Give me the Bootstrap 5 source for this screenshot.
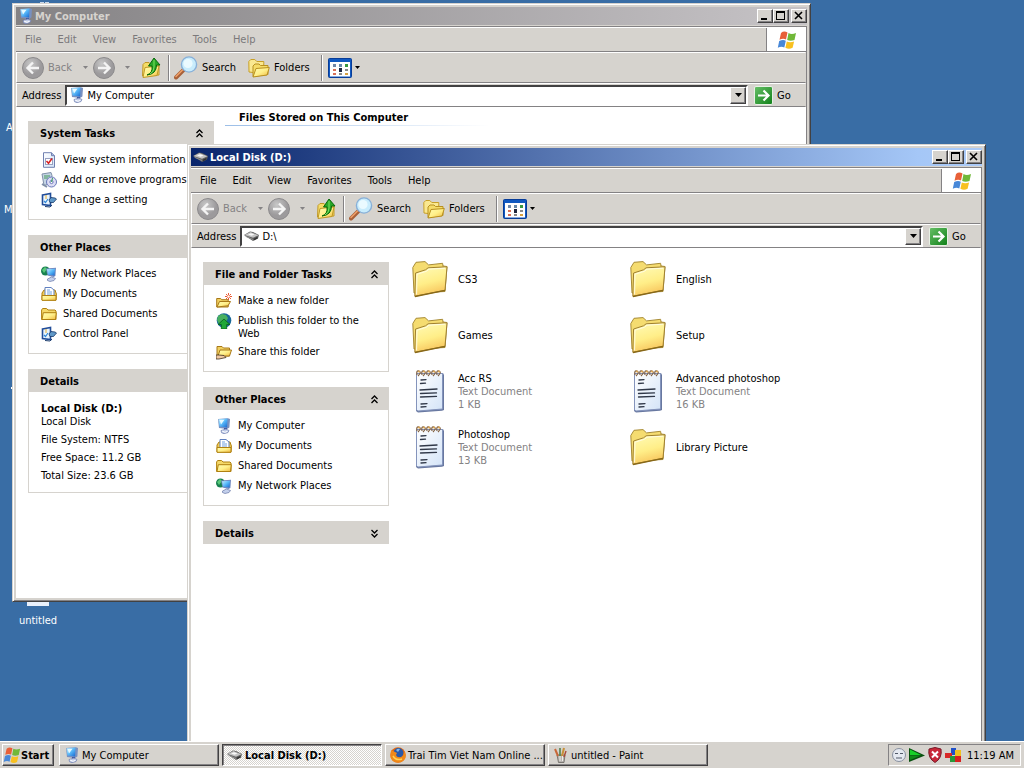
<!DOCTYPE html>
<html lang="en">
<head>
<meta charset="utf-8">
<meta name="viewport" content="width=device-width, initial-scale=1">
<title>Desktop</title>
<link href="https://cdn.jsdelivr.net/npm/bootstrap@5.3.0/dist/css/bootstrap.min.css" rel="stylesheet">
<style>
:root{--face:#d6d3ce;--shade:#848284;--dark:#424142;}
body{font:11px/13px "DejaVu Sans Condensed","DejaVu Sans",sans-serif;color:#000;background:#396da5;overflow:hidden}
a{color:inherit;text-decoration:none}
button{font:inherit;color:inherit;background:none;border:0;padding:0;line-height:13px;text-align:left}
svg{display:block;flex:none}
.defs{width:0;height:0;position:absolute}
.i16{width:16px;height:16px}
.desk>a{position:absolute;color:#fff;width:70px;text-align:center}
.win{position:absolute;background:var(--face);border:1px solid;border-color:var(--face) var(--dark) var(--dark) var(--face);box-shadow:inset 1px 1px #fff,inset -1px -1px var(--shade);padding:3px}
.win-my{left:12px;top:3px;right:213px;bottom:139px}
.win-disk{left:187px;top:144px;right:38px;bottom:-20px}
.titlebar{height:18px;color:var(--face);font-weight:bold;padding:0 0 0 2px;background:linear-gradient(90deg,#848284,#c6c3c6)}
.win-disk .titlebar{color:#fff;background:linear-gradient(90deg,#08246b,#a5c7f7 92%,#adcbf7)}
.titlebar svg{margin-right:1px}
.capbtn{width:16px;height:14px;background:var(--face);border:1px solid;border-color:#fff var(--dark) var(--dark) #fff;box-shadow:inset -1px -1px var(--shade)}
.capbtn svg{width:14px;height:12px}
.capclose{margin-left:2px}
.client{border:1px solid var(--shade);border-width:1px 1px 0 0;margin-top:1px;background:#fff}
.menubar{height:25px;border-bottom:1px solid var(--shade);background:var(--face);border-top:1px solid #fff;padding-left:1px}
.menubar button{padding:0 8px}
.win-my .menubar{color:#7b797b}
.brand{width:40px;background:#fff;border-left:1px solid var(--shade)}
.toolbar{display:grid;grid-template-columns:56px 15px 24px 20px 27px 10px 74px 67px 13px 24px 10px;align-items:center;height:31px;background:var(--face);border:1px solid;border-color:#fff var(--face) var(--shade) #fff;padding-left:5px}
.toolbar button{display:flex;align-items:center}
.toolbar .off{color:var(--shade)}
.rule{width:2px;height:26px;border-left:1px solid var(--shade);border-right:1px solid #fff;justify-self:center}
.arrow{width:7px;height:4px;margin:auto}
.toolbar .arrow{width:5px;height:3px}
.address{height:24px;background:var(--face);border:1px solid;border-color:#fff var(--face) var(--shade) #fff;padding-left:5px}
.combo{height:21px;background:#fff;border:2px solid;border-color:var(--dark) #fff #fff var(--dark);padding-left:2px}
.combo input{border:0;outline:0;background:none;font:inherit;padding:1px 0 0 2px;min-width:0}
.drop{width:16px;height:17px;background:var(--face);border:1px solid;border-color:#fff var(--dark) var(--dark) #fff;box-shadow:inset -1px -1px var(--shade)}
.gobtn{width:57px;padding-left:6px}
.side{width:186px;margin:14px 0 0 12px;flex:none}
.panel{margin-bottom:15px}
.panel h2{font-size:11px;line-height:23px;height:23px;font-weight:bold;margin:0;padding:1px 10px 0 12px;background:var(--face)}
.panel .inner{border:1px solid var(--face);border-top:0;padding:8px 4px 11px 12px}
.panel li{display:flex;min-height:16px;margin-bottom:4px}
.panel li:last-child{margin-bottom:0}
.panel li a{display:flex}
.panel li span{padding:1px 0 0 6px;max-width:150px}
.panel .facts{padding:10px 4px 10px 12px}
.facts p{margin:0 0 5px}
.stored{margin:4px 0 0 11px}
.stored h1{font-size:11px;line-height:13px;font-weight:bold;margin:0;padding:0 0 0 14px}
.stored hr{margin:1px 0 0;width:265px;border:0;height:1px;opacity:1;background:linear-gradient(90deg,#9cbee7,#fff)}
.files{display:grid;grid-template-columns:218px 218px;grid-auto-rows:56px;align-content:start;margin:3px 0 0 23px}
.files a{display:flex;align-items:center}
.files svg{width:36px;height:44px;margin-right:10px}
.files small{font-size:11px;color:var(--shade);display:block}
.taskbar{height:27px;background:var(--face);box-shadow:inset 0 1px #fff;padding:3px 3px 2px 2px;position:relative;z-index:5}
.taskbtn{width:160px;height:22px;margin-right:3px;padding:0 2px 0 4px;background:var(--face);border:1px solid;border-color:#fff var(--dark) var(--dark) #fff;box-shadow:inset -1px -1px var(--shade);display:flex;align-items:center}
.taskbtn svg{margin-right:2px}
.startbtn{width:52px;margin-right:5px;padding:0;font-weight:bold}
.startbtn svg{margin-right:0}
.pressed{font-weight:bold;border-color:var(--dark) #fff #fff var(--dark);box-shadow:inset 1px 1px var(--shade);background:repeating-conic-gradient(#fff 0 25%,#d6d3ce 0 50%) 0 0/2px 2px}
.tray{border:1px solid;border-color:var(--shade) #fff #fff var(--shade);height:22px;padding:0 6px 0 2px;gap:2px}
</style>
</head>
<body class="vh-100 d-flex flex-column">
<svg class="defs" aria-hidden="true">
<defs>
<linearGradient id="gf" x1="0" y1="0" x2="1" y2="1"><stop offset="0" stop-color="#fffbb0"/><stop offset=".5" stop-color="#fff08a"/><stop offset="1" stop-color="#f0b840"/></linearGradient>
<linearGradient id="gb" x1="0" y1="0" x2=".3" y2="1"><stop offset="0" stop-color="#fffbb8"/><stop offset=".6" stop-color="#ffee88"/><stop offset="1" stop-color="#f8c860"/></linearGradient>
<linearGradient id="gs" x1="0" y1="0" x2="1" y2="1"><stop offset="0" stop-color="#c8f0ff"/><stop offset=".5" stop-color="#58b8f8"/><stop offset="1" stop-color="#1868d0"/></linearGradient>
<radialGradient id="gg" cx=".4" cy=".3"><stop offset="0" stop-color="#c8c8c8"/><stop offset="1" stop-color="#9c9a9c"/></radialGradient>
<radialGradient id="gw" cx=".3" cy=".25" r=".8"><stop offset="0" stop-color="#90e088"/><stop offset=".5" stop-color="#189048"/><stop offset="1" stop-color="#084828"/></radialGradient>
<linearGradient id="gp" x1="0" y1="0" x2="1" y2="1"><stop offset="0" stop-color="#fff"/><stop offset="1" stop-color="#d4e4f8"/></linearGradient>
<linearGradient id="gn" x1="0" y1="0" x2="1" y2="1"><stop offset="0" stop-color="#68c068"/><stop offset="1" stop-color="#108018"/></linearGradient>
</defs>
<symbol id="pc" viewBox="0 0 16 16"><path d="M2 1l10-.8 2 .8-.6 8.500-2.400 1.500-8-1z" fill="#7890c0"/><path d="M2.500 1.200l9-.8-.4 9L3.500 8.500z" fill="url(#gs)"/><path d="M3.500 2l5-.3L5 6.500z" fill="#e8faff"/><path d="M8 10l3 0 0 2-3-.3z" fill="#4058a0"/><path d="M5 12.500l5-1.500 3 1.500-1 2-4 1.200-2.500-1z" fill="#c0cce8" stroke="#7080b0" stroke-width=".7"/><path d="M6 13l3 1.300 2.500-1" stroke="#fff" fill="none"/></symbol>
<symbol id="drive" viewBox="0 0 16 16"><path d="M0 7l6-3.500 3 .5 6 3-1 3.500-5 2.500z" fill="#606060"/><path d="M.5 7l6-3 8 3.200-5.500 2.600z" fill="#c4c4c4"/><path d="M4 6.500l3-1.200 3.500 1.300-3 1.200z" fill="#f8f8f8"/><path d="M1 7.600l8 3.400v1L2 9z" fill="#909090"/><path d="M10 11.500l3.500-1.800" stroke="#303030" stroke-width="1.500"/></symbol>
<symbol id="net" viewBox="0 0 16 16"><circle cx="4.500" cy="5" r="4.500" fill="#188050"/><path d="M1 4l3-3 2 2-3 4z" fill="#58c878"/><path d="M5 2.500l10-.8-.6 8.300-1.900 1-6-1.500z" fill="#7088c0"/><path d="M6 3.300l8-.6-.5 6.800L7 8.600z" fill="url(#gs)"/><path d="M6.500 13l4-2 4 1.500-1.500 2-4 1-2.500-1z" fill="#c4d0ec" stroke="#6878a8" stroke-width=".7"/></symbol>
<symbol id="fold" viewBox="0 0 16 16"><path d="M.6 13.500V4l1-1.500h4L7 4h7l1 1v8.500z" fill="#f4d868" stroke="#b08010"/><path d="M1 13.500l1.300-6.800h13L14.500 13.500z" fill="url(#gf)" stroke="#b08010"/></symbol>
<symbol id="docs" viewBox="0 0 16 16"><path d="M1 14V7l2-3h11l1.400 4-.4 6z" fill="#f0cc58" stroke="#b08010"/><path d="M4 10V1.500h6l3 2.500v6z" fill="#fff" stroke="#6080c0"/><path d="M6 4h3M6 6h5M6 8h5" stroke="#70a0e0"/><path d="M1 14.300V9.500h14v4.800z" fill="url(#gf)" stroke="#b08010"/></symbol>
<symbol id="control" viewBox="0 0 16 16"><path d="M1.500 3l8-1.500v12l-8-1z" fill="#e8f4ff" stroke="#204c98" stroke-width="1.600"/><path d="M3 9l1.500 1.500L7 7" stroke="#3088d8" stroke-width="1.200" fill="none"/><path d="M10 5.500l4 .5 1.500 1-3 3.500H9L8 8z" fill="#6098c8" stroke="#183868" stroke-width=".8"/><path d="M4 14.500l5 .5 2-2" stroke="#204070" fill="none"/><path d="M5 3v4" stroke="#e8b030"/></symbol>
<symbol id="sys" viewBox="0 0 16 16"><path d="M2.500.7h8l3 3v11.600h-11z" fill="url(#gp)" stroke="#7080b0"/><path d="M10.500.7v3h3" fill="#a8b8e0" stroke="#7080b0"/><rect x="4.500" y="6.500" width="7" height="6" fill="#fff" stroke="#98a0c0"/><path d="M5.500 9l2 2.300L11 6.500" stroke="#d82020" stroke-width="1.500" fill="none"/></symbol>
<symbol id="addrem" viewBox="0 0 16 16"><path d="M1 2l9-1.500 1 3-1 8-7 2z" fill="#c4d4e4" stroke="#8090a8"/><path d="M3 4h6M3 6h4" stroke="#409858"/><circle cx="10.500" cy="10" r="5" fill="#dcdcf4" stroke="#6878b8"/><circle cx="10.500" cy="10" r="1.600" fill="#fff" stroke="#6878b8"/><path d="M10.500 10l1-4" stroke="#38a058"/><path d="M1 12l5 3" stroke="#8090a8" stroke-width="2"/></symbol>
<symbol id="newf" viewBox="0 0 16 16"><path d="M.7 14V5.500h4l1 1.200h6.500V14z" fill="#f0d060" stroke="#a87818"/><path d="M1 14l2.500-5.500h11L12 12.800z" fill="url(#gf)" stroke="#a87818"/><path d="M12.500 0v7M9 3.500h7M10 1l5 5M15 1l-5 5" stroke="#e84820" stroke-width=".9"/><circle cx="12.500" cy="3.500" r="1.200" fill="#fff"/></symbol>
<symbol id="globe" viewBox="0 0 16 16"><circle cx="8" cy="7.500" r="7.300" fill="#186898"/><path d="M2 3l4-2 4 1 2 3-2 4-4-1-3 3-2-4z" fill="#48b060"/><path d="M8 6l6 5.500h-3.300V16H5.300v-4.500H2z" fill="#20a838" stroke="#086018" stroke-width=".8"/></symbol>
<symbol id="share" viewBox="0 0 16 16"><path d="M1 12V2.500h5L7.500 4h6v8z" fill="#f0d060" stroke="#a87818"/><path d="M2 12l2-6h11.500l-2 6z" fill="url(#gf)" stroke="#a87818"/><path d="M0 11h3l5 .5 2 2-7 1.500H0z" fill="#f0c8a0" stroke="#403020" stroke-width=".8"/></symbol>
<symbol id="bigf" viewBox="0 0 36 44"><path d="M2 36L.8 10.500 4 5.300l9-.7 3.600 3.300 14-1.600.4 2.700 4 .5-2 25z" fill="#f5dc70" stroke="#a88c38"/><path d="M31 8v22" stroke="#c8a848"/><path d="M2.800 39.300L3.600 16l10-3.200 2.500-2L35 9.800l-2 23.500z" fill="url(#gb)" stroke="#a08030"/><path d="M4.600 37.500l.4-20.300 9.600-3 2.400-2 16-1" fill="none" stroke="#fffce0"/><path d="M3 39.500l30-6.200" stroke="#886818" stroke-width="1.300"/></symbol>
<symbol id="note" viewBox="0 0 36 44"><path d="M5 4l26 0 1 2v35l-2 .7L6 43.500 4 42z" fill="#6878a0"/><path d="M4.500 4.500h26V40L6 42l-1.500-1z" fill="url(#gp)" stroke="#8494bc"/><g fill="none" stroke="#806040" stroke-width="1.200"><path d="M5 6q-1-5 2-4t-1 5M10 6q-1-5 2-4t-1 5M15 6q-1-5 2-4t-1 5M20 6q-1-5 2-4t-1 5M25 6q-1-5 2-4t-1 5"/></g><g fill="#e0a850"><circle cx="7" cy="2.500" r="1"/><circle cx="12" cy="2.500" r="1"/><circle cx="17" cy="2.500" r="1"/><circle cx="22" cy="2.500" r="1"/><circle cx="27" cy="2.500" r="1"/></g><path d="M9 11l5-.4M8.500 14.500l5-.3M8 21l17-1M8.500 24.500l16-.6M8.500 28l16-.6M9 35l6-.4M9 38l5-.3" stroke="#303848" stroke-width="1.300" stroke-linecap="round"/></symbol>
<symbol id="back" viewBox="0 0 22 22"><circle cx="11" cy="11" r="10.500" fill="url(#gg)" stroke="#8c8a8c"/><path d="M17 11H6M11 5.500L5.500 11l5.500 5.500" fill="none" stroke="#f4f4f4" stroke-width="2.400"/></symbol>
<symbol id="fwd" viewBox="0 0 22 22"><circle cx="11" cy="11" r="10.500" fill="url(#gg)" stroke="#8c8a8c"/><path d="M5 11h11M11 5.500l5.500 5.500-5.500 5.500" fill="none" stroke="#f4f4f4" stroke-width="2.400"/></symbol>
<symbol id="up" viewBox="0 0 20 22"><path d="M1.500 19L2 7.500l2-2h4l2 2h8V18z" fill="#f5dc68" stroke="#c09828"/><path d="M2 20.500l2-10 14-1.500-2 9.500z" fill="url(#gf)" stroke="#c09828"/><path d="M6 18q6-2 5-9H7.500L13 1l6 7h-3.500q0 9-9.500 10z" fill="#28a828" stroke="#086808"/><path d="M13 3v7q0 5-4 7" stroke="#80e060" fill="none"/></symbol>
<symbol id="find" viewBox="0 0 24 24"><path d="M9.500 14L2 21.500" stroke="#a86038" stroke-width="4" stroke-linecap="round"/><path d="M8.500 14L2 20.500" stroke="#f0a068" stroke-width="1.500" stroke-linecap="round"/><circle cx="15" cy="8.500" r="7.600" fill="#c8ecfc" stroke="#88b0d8" stroke-width="1.400"/><circle cx="14" cy="7.500" r="4.600" fill="#eafaff"/></symbol>
<symbol id="folders" viewBox="0 0 22 20"><path d="M1 14L.8 3.500l2-2h4l2 2h7V7L5 14.500z" fill="#fae890" stroke="#c8a028"/><path d="M5 18.500V8l2-2h4l1.500 1.500H20v9z" fill="#f5dc68" stroke="#b89020"/><path d="M5 19l3-8.500 13.300-1L19 17z" fill="url(#gf)" stroke="#b89020"/></symbol>
<symbol id="views" viewBox="0 0 24 20"><rect x=".5" y=".5" width="23" height="19" rx="1" fill="#1058c0" stroke="#083c98"/><rect x="2" y="4" width="20" height="14.500" fill="#fff"/><path fill="#7088a8" d="M5 6h3v3H5z"/><path fill="#6888a8" d="M11 6h3v3h-3z"/><path fill="#389840" d="M17 6h3v3h-3z"/><path fill="#d87058" d="M5 11h3v2H5zM5 15h3v2H5z"/><path fill="#202840" d="M11 10h3v4h-3z"/><path fill="#888" d="M17 11h3v2h-3zM11 15h3v2h-3z"/><path fill="#d8a040" d="M17 15h3v2h-3z"/></symbol>
<symbol id="flag" viewBox="0 0 20 18"><path d="M4 2q3-2.500 6.500-.5L9 8.500Q6 7 2.500 8.800z" fill="#e86038"/><path d="M11.500 2q3 1.800 7.500 0l-1.500 7q-4 1.500-7.300 0z" fill="#70b838"/><path d="M2.200 10Q6 8 8.800 9.700L7.300 16.500Q4.500 15 .8 16.700z" fill="#4888d8"/><path d="M9.800 10.500q3.200 1.500 7.300 0l-1.500 6.300q-3.700 2-7.200 0z" fill="#f8c020"/></symbol>
<symbol id="go" viewBox="0 0 19 19"><rect x=".5" y=".5" width="18" height="18" rx="1.500" fill="url(#gn)" stroke="#e8f0e4"/><path d="M4 9.500h10M9.500 4.500l5 5-5 5" fill="none" stroke="#fff" stroke-width="2.200"/></symbol>
<symbol id="fox" viewBox="0 0 16 16"><circle cx="8" cy="8" r="7.700" fill="#e06810"/><circle cx="8.500" cy="6" r="5" fill="#2858a8"/><path d="M6 3q2-2 4-1l-2 3z" fill="#80b8e8"/><path d="M1 3l3 1.500L7 6 6 8q1 3 5 2 3-1 3-6 3 4 1 8-3 4-8 3.500Q2 15 .5 10z" fill="#f08818"/><path d="M3 9q3 5 9 3" stroke="#ffd050" stroke-width="1.500" fill="none"/></symbol>
<symbol id="paint" viewBox="0 0 16 16"><path d="M4 8h8l-1 7.500H5.500z" fill="#b8b4b0" stroke="#686460" stroke-width=".8"/><path d="M5 9L2 2" stroke="#c86838" stroke-width="2"/><path d="M7 9V1" stroke="#508050" stroke-width="1.600"/><path d="M9 9l2-8" stroke="#c89038" stroke-width="2"/><path d="M11 10l2-6" stroke="#a84838" stroke-width="1.400"/><path d="M7 9v5M9.500 9v5" stroke="#f0ece8"/></symbol>
<symbol id="dn" viewBox="0 0 7 4"><path d="M0 0h7L3.500 4z" fill="currentColor"/></symbol>
<symbol id="cmin" viewBox="0 0 14 12"><path d="M3 8h6v2H3z"/></symbol>
<symbol id="cmax" viewBox="0 0 14 12"><path d="M2 1h9v9H2zm1 2v6h7V3z" fill-rule="evenodd"/></symbol>
<symbol id="ccls" viewBox="0 0 14 12"><path d="M3 2l7 7M10 2L3 9" stroke="#000" stroke-width="1.600"/></symbol>
<symbol id="chup" viewBox="0 0 9 9"><path d="M1.500 4l3-3 3 3M1.500 8l3-3 3 3" fill="none" stroke="#000" stroke-width="1.300"/></symbol>
<symbol id="chdn" viewBox="0 0 9 9"><path d="M1.500 1l3 3 3-3M1.500 5l3 3 3-3" fill="none" stroke="#000" stroke-width="1.300"/></symbol>
</svg>

<main class="desk flex-grow-1 position-relative overflow-hidden">
  <svg style="position:absolute;left:37px;top:0" width="14" height="5"><path d="M3 2h4v1H3zM8 2h4v1H8z" fill="#c8d8ec"/></svg>
  <a href="#" style="left:6px;top:121px;width:auto">A</a>
  <a href="#" style="left:4px;top:203px;width:auto">M</a>
  <svg style="position:absolute;left:11px;top:387px" width="2" height="2"><path d="M0 0h2v2H0z" fill="#fff"/></svg>
  <a href="#" style="left:3px;top:590px"><svg class="mx-auto" width="22" height="16"><path d="M0 0h22v16H0z" fill="#e8f0fc"/></svg><span class="d-block mt-2">untitled</span></a>

  <section class="win win-my d-flex flex-column" aria-label="My Computer">
    <header class="titlebar d-flex align-items-center"><svg class="i16"><use href="#pc"/></svg><span class="flex-grow-1">My Computer</span>
      <button class="capbtn" aria-label="Minimize"><svg><use href="#cmin"/></svg></button><button class="capbtn" aria-label="Maximize"><svg><use href="#cmax"/></svg></button><button class="capbtn capclose" aria-label="Close"><svg><use href="#ccls"/></svg></button></header>
    <div class="client flex-grow-1">
      <nav class="menubar d-flex"><div class="d-flex flex-grow-1 align-items-center"><button>File</button><button>Edit</button><button>View</button><button>Favorites</button><button>Tools</button><button>Help</button></div><div class="brand d-flex align-items-center justify-content-center"><svg width="20" height="18"><use href="#flag"/></svg></div></nav>
      <div class="toolbar">
        <button class="off"><svg class="me-1" width="22" height="22"><use href="#back"/></svg>Back</button>
        <button class="off" aria-label="Back list"><svg class="arrow"><use href="#dn"/></svg></button>
        <button aria-label="Forward"><svg width="22" height="22"><use href="#fwd"/></svg></button>
        <button class="off" aria-label="Forward list"><svg class="arrow"><use href="#dn"/></svg></button>
        <button class="justify-content-center" aria-label="Up"><svg width="20" height="22"><use href="#up"/></svg></button>
        <span class="rule"></span>
        <button><svg width="24" height="24" class="me-1"><use href="#find"/></svg>Search</button>
        <button><svg width="22" height="20" class="me-1"><use href="#folders"/></svg>Folders</button>
        <span class="rule"></span>
        <button aria-label="Views"><svg width="24" height="20"><use href="#views"/></svg></button>
        <button aria-label="View list"><svg class="arrow"><use href="#dn"/></svg></button>
      </div>
      <div class="address d-flex align-items-center"><label for="addr1" class="me-1">Address</label>
        <div class="combo d-flex align-items-center flex-grow-1"><svg class="i16"><use href="#pc"/></svg><input id="addr1" class="flex-grow-1" value="My Computer"><button class="drop" aria-label="History"><svg class="arrow"><use href="#dn"/></svg></button></div>
        <button class="gobtn d-flex align-items-center"><svg class="me-1" width="19" height="19"><use href="#go"/></svg>Go</button></div>
      <div class="d-flex">
        <aside class="side">
          <div class="panel"><h2 class="d-flex align-items-center justify-content-between">System Tasks<svg width="9" height="9"><use href="#chup"/></svg></h2>
            <ul class="inner list-unstyled m-0"><li><a href="#"><svg class="i16"><use href="#sys"/></svg><span class="text-nowrap">View system information</span></a></li><li><a href="#"><svg class="i16"><use href="#addrem"/></svg><span class="text-nowrap">Add or remove programs</span></a></li><li><a href="#"><svg class="i16"><use href="#control"/></svg><span>Change a setting</span></a></li></ul></div>
          <div class="panel"><h2>Other Places</h2>
            <ul class="inner list-unstyled m-0"><li><a href="#"><svg class="i16"><use href="#net"/></svg><span>My Network Places</span></a></li><li><a href="#"><svg class="i16"><use href="#docs"/></svg><span>My Documents</span></a></li><li><a href="#"><svg class="i16"><use href="#fold"/></svg><span>Shared Documents</span></a></li><li><a href="#"><svg class="i16"><use href="#control"/></svg><span>Control Panel</span></a></li></ul></div>
          <div class="panel"><h2>Details</h2>
            <div class="inner facts"><b>Local Disk (D:)</b><p>Local Disk</p><p>File System: NTFS</p><p>Free Space: 11.2 GB</p><p class="mb-0">Total Size: 23.6 GB</p></div></div>
        </aside>
        <div class="stored"><h1>Files Stored on This Computer</h1><hr></div>
      </div>
    </div>
  </section>

  <section class="win win-disk d-flex flex-column" aria-label="Local Disk (D:)">
    <header class="titlebar d-flex align-items-center"><svg class="i16"><use href="#drive"/></svg><span class="flex-grow-1">Local Disk (D:)</span>
      <button class="capbtn" aria-label="Minimize"><svg><use href="#cmin"/></svg></button><button class="capbtn" aria-label="Maximize"><svg><use href="#cmax"/></svg></button><button class="capbtn capclose" aria-label="Close"><svg><use href="#ccls"/></svg></button></header>
    <div class="client flex-grow-1">
      <nav class="menubar d-flex"><div class="d-flex flex-grow-1 align-items-center"><button>File</button><button>Edit</button><button>View</button><button>Favorites</button><button>Tools</button><button>Help</button></div><div class="brand d-flex align-items-center justify-content-center"><svg width="20" height="18"><use href="#flag"/></svg></div></nav>
      <div class="toolbar">
        <button class="off"><svg class="me-1" width="22" height="22"><use href="#back"/></svg>Back</button>
        <button class="off" aria-label="Back list"><svg class="arrow"><use href="#dn"/></svg></button>
        <button aria-label="Forward"><svg width="22" height="22"><use href="#fwd"/></svg></button>
        <button class="off" aria-label="Forward list"><svg class="arrow"><use href="#dn"/></svg></button>
        <button class="justify-content-center" aria-label="Up"><svg width="20" height="22"><use href="#up"/></svg></button>
        <span class="rule"></span>
        <button><svg width="24" height="24" class="me-1"><use href="#find"/></svg>Search</button>
        <button><svg width="22" height="20" class="me-1"><use href="#folders"/></svg>Folders</button>
        <span class="rule"></span>
        <button aria-label="Views"><svg width="24" height="20"><use href="#views"/></svg></button>
        <button aria-label="View list"><svg class="arrow"><use href="#dn"/></svg></button>
      </div>
      <div class="address d-flex align-items-center"><label for="addr2" class="me-1">Address</label>
        <div class="combo d-flex align-items-center flex-grow-1"><svg class="i16"><use href="#drive"/></svg><input id="addr2" class="flex-grow-1" value="D:\"><button class="drop" aria-label="History"><svg class="arrow"><use href="#dn"/></svg></button></div>
        <button class="gobtn d-flex align-items-center"><svg class="me-1" width="19" height="19"><use href="#go"/></svg>Go</button></div>
      <div class="d-flex">
        <aside class="side">
          <div class="panel"><h2 class="d-flex align-items-center justify-content-between">File and Folder Tasks<svg width="9" height="9"><use href="#chup"/></svg></h2>
            <ul class="inner list-unstyled m-0"><li><a href="#"><svg class="i16"><use href="#newf"/></svg><span>Make a new folder</span></a></li><li><a href="#"><svg class="i16"><use href="#globe"/></svg><span>Publish this folder to the Web</span></a></li><li><a href="#"><svg class="i16"><use href="#share"/></svg><span>Share this folder</span></a></li></ul></div>
          <div class="panel"><h2 class="d-flex align-items-center justify-content-between">Other Places<svg width="9" height="9"><use href="#chup"/></svg></h2>
            <ul class="inner list-unstyled m-0"><li><a href="#"><svg class="i16"><use href="#pc"/></svg><span>My Computer</span></a></li><li><a href="#"><svg class="i16"><use href="#docs"/></svg><span>My Documents</span></a></li><li><a href="#"><svg class="i16"><use href="#fold"/></svg><span>Shared Documents</span></a></li><li><a href="#"><svg class="i16"><use href="#net"/></svg><span>My Network Places</span></a></li></ul></div>
          <div class="panel"><h2 class="d-flex align-items-center justify-content-between">Details<svg width="9" height="9"><use href="#chdn"/></svg></h2></div>
        </aside>
        <div class="files">
          <a href="#"><svg><use href="#bigf"/></svg>CS3</a>
          <a href="#"><svg><use href="#bigf"/></svg>English</a>
          <a href="#"><svg><use href="#bigf"/></svg>Games</a>
          <a href="#"><svg><use href="#bigf"/></svg>Setup</a>
          <a href="#"><svg><use href="#note"/></svg><span>Acc RS<small>Text Document</small><small>1 KB</small></span></a>
          <a href="#"><svg><use href="#note"/></svg><span>Advanced photoshop<small>Text Document</small><small>16 KB</small></span></a>
          <a href="#"><svg><use href="#note"/></svg><span>Photoshop<small>Text Document</small><small>13 KB</small></span></a>
          <a href="#"><svg><use href="#bigf"/></svg>Library Picture</a>
        </div>
      </div>
    </div>
  </section>
</main>

<footer class="taskbar d-flex">
  <button class="taskbtn startbtn"><svg width="18" height="18"><use href="#flag"/></svg>Start</button>
  <button class="taskbtn"><svg class="i16"><use href="#pc"/></svg>My Computer</button>
  <button class="taskbtn pressed"><svg class="i16"><use href="#drive"/></svg>Local Disk (D:)</button>
  <button class="taskbtn"><svg class="i16"><use href="#fox"/></svg><span class="text-nowrap">Trai Tim Viet Nam Online ...</span></button>
  <button class="taskbtn"><svg class="i16"><use href="#paint"/></svg>untitled - Paint</button>
  <div class="tray d-flex align-items-center ms-auto">
    <svg class="i16" viewBox="0 0 16 16"><circle cx="8" cy="8" r="6.500" fill="#e4e8f0" stroke="#8890a0"/><path d="M4 6.500h3M9 6.500h3M5 11h6" stroke="#505868"/></svg>
    <svg class="i16" viewBox="0 0 16 16"><path d="M0 1l16 7.500L0 15z" fill="#085010"/><path d="M1 2.500l11 5.500H1z" fill="#18d028"/><path d="M1 8.500h11L1 13z" fill="#108818"/></svg>
    <svg class="i16" viewBox="0 0 16 16"><path d="M8 .5l6 1.500q1.500 9-6 13.500Q.5 11 2 2z" fill="#c82838" stroke="#781828"/><path d="M5 4.500l6 6M11 4.500l-6 6" stroke="#fff" stroke-width="2"/></svg>
    <svg class="i16" viewBox="0 0 16 16"><path d="M6 1h5v7H6z" fill="#2050c8"/><path d="M0 6h7v5H0z" fill="#d82828"/><path d="M10 3h6v6h-6z" fill="#f0c020"/><path d="M5 9h6v6H5z" fill="#289838"/><path d="M10 9h6v6h-6z" fill="#d82020"/></svg>
    <span class="ms-1 text-nowrap">11:19 AM</span>
  </div>
</footer>
<script src="https://cdn.jsdelivr.net/npm/bootstrap@5.3.0/dist/js/bootstrap.bundle.min.js"></script>
</body>
</html>
